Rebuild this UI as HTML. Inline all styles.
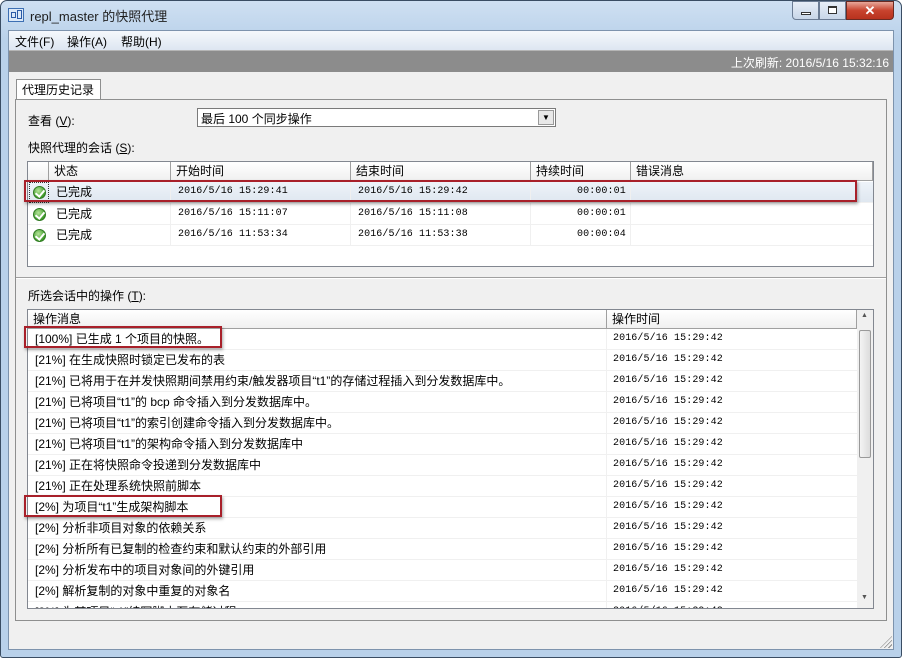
<!DOCTYPE html>
<html><head><meta charset="utf-8"><style>
*{box-sizing:border-box;margin:0;padding:0}
body{width:902px;height:658px;overflow:hidden;background:#fff;font-family:"Liberation Sans","Noto Sans CJK SC",sans-serif;font-size:12px;color:#000;position:relative}
.a{position:absolute}
.win{left:0;top:0;width:902px;height:658px;border:1px solid #3a4d63;border-radius:7px 7px 3px 3px;background:linear-gradient(#cfe0f2,#b9d1ea 40px,#b9d1ea);}
.grid{background:#fff;border:1px solid #828790}
.hd{height:19px;background:linear-gradient(#fff,#f0f0f0);border-bottom:1px solid #a0a0a0}
.col{position:absolute;top:0;height:19px;border-left:1px solid #a0a0a0;padding:1px 5px;line-height:17px}
.row{position:absolute;left:0;height:21px;border-bottom:1px solid #f0f0f0;line-height:20px;white-space:nowrap}
.m{font-family:"Liberation Mono","Noto Sans CJK SC",monospace;font-size:10px;letter-spacing:0.1px}
.red{position:absolute;border:2px solid #a8202a;box-shadow:1px 2px 3px rgba(0,0,0,.35)}
.ok{position:absolute;width:13px;height:13px;border-radius:50%;background:radial-gradient(circle at 40% 35%,#b6e59a,#3f9a2a 70%);border:1px solid #2f7a22}
.ok:after{content:"";position:absolute;left:3px;top:1px;width:4px;height:7px;border:solid #fff;border-width:0 2px 2px 0;transform:rotate(40deg)}
</style></head><body>
<div class="a win"></div>
<div class="a" style="left:8px;top:8px;width:16px;height:14px;border:1px solid #3d6fb3;background:#dbe8f7"></div>
<div class="a" style="left:11px;top:12px;width:5px;height:6px;border:1px solid #2a5aa6"></div>
<div class="a" style="left:17px;top:10px;width:5px;height:9px;border:1px solid #2a5aa6"></div>
<div class="a" style="left:30px;top:6px;font-size:13px;color:#1e1e1e">repl_master 的快照代理</div>
<div class="a" style="left:792px;top:1px;width:27px;height:19px;border:1px solid #6b7c94;border-radius:0 0 0 4px;background:linear-gradient(#e7eef7,#c8d6e8)"></div>
<div class="a" style="left:801px;top:12px;width:10px;height:3px;border:1px solid #333;background:#fff"></div>
<div class="a" style="left:819px;top:1px;width:27px;height:19px;border:1px solid #6b7c94;background:linear-gradient(#e7eef7,#c8d6e8)"></div>
<div class="a" style="left:828px;top:6px;width:9px;height:8px;border:1px solid #333;border-top-width:2px;background:#fff"></div>
<div class="a" style="left:846px;top:1px;width:48px;height:19px;border:1px solid #6b2a22;border-radius:0 0 4px 0;background:linear-gradient(#e8a89a,#c8432e 50%,#b8321e);color:#fff;font-weight:bold;text-align:center;line-height:17px;font-size:13px">✕</div>
<div class="a" style="left:8px;top:30px;width:886px;height:620px;background:#f0f0f0;border:1px solid #7d93ad"></div>
<div class="a" style="left:9px;top:31px;width:884px;height:19px;background:linear-gradient(#f5f8fc,#dde6f1)"></div>
<div class="a" style="left:15px;top:33px">文件(F)</div>
<div class="a" style="left:67px;top:33px">操作(A)</div>
<div class="a" style="left:121px;top:33px">帮助(H)</div>
<div class="a" style="left:9px;top:50px;width:884px;height:22px;background:#8c8c8c;border-top:1px solid #b5b5b5"></div>
<div class="a" style="right:13px;top:54px;color:#fff">上次刷新: 2016/5/16 15:32:16</div>
<div class="a" style="left:16px;top:79px;width:85px;height:21px;background:#fff;border:1px solid #8e8f8f;border-bottom:none"></div>
<div class="a" style="left:22px;top:81px">代理历史记录</div>
<div class="a" style="left:15px;top:99px;width:872px;height:522px;background:#f0f0f0;border:1px solid #8e8f8f"></div>
<div class="a" style="left:28px;top:112px">查看 (<u>V</u>):</div>
<div class="a" style="left:197px;top:108px;width:359px;height:19px;background:#fff;border:1px solid #7a7a7a"></div>
<div class="a" style="left:201px;top:110px">最后 100 个同步操作</div>
<div class="a" style="left:538px;top:110px;width:16px;height:15px;background:#e8e8e8;border:1px solid #999;text-align:center;font-size:8px;line-height:14px">▼</div>
<div class="a" style="left:28px;top:139px">快照代理的会话 (<u>S</u>):</div>
<div class="a grid" style="left:27px;top:161px;width:847px;height:106px">
 <div class="a hd" style="left:0;top:0;width:845px"></div>
 <div class="col" style="left:20px">状态</div>
 <div class="col" style="left:142px">开始时间</div>
 <div class="col" style="left:322px">结束时间</div>
 <div class="col" style="left:502px">持续时间</div>
 <div class="col" style="left:602px;width:243px;border-right:1px solid #a0a0a0">错误消息</div>
 <div class="row" style="top:20px;width:845px;background:linear-gradient(#eef3f9,#dfe7f0)"></div>
 <div class="a" style="left:1px;top:20px;width:20px;height:21px;border:1px dotted #333"></div>
 <div class="row" style="top:42px;width:845px"></div>
 <div class="row" style="top:63px;width:845px"></div>
 <div class="ok" style="left:5px;top:24px"></div><div class="ok" style="left:5px;top:46px"></div><div class="ok" style="left:5px;top:67px"></div>
 <div class="row" style="left:28px;top:20px">已完成</div><div class="row" style="left:28px;top:42px">已完成</div><div class="row" style="left:28px;top:63px">已完成</div>
 <div class="row m" style="left:150px;top:20px">2016/5/16 15:29:41</div><div class="row m" style="left:150px;top:42px">2016/5/16 15:11:07</div><div class="row m" style="left:150px;top:63px">2016/5/16 11:53:34</div>
 <div class="row m" style="left:330px;top:20px">2016/5/16 15:29:42</div><div class="row m" style="left:330px;top:42px">2016/5/16 15:11:08</div><div class="row m" style="left:330px;top:63px">2016/5/16 11:53:38</div>
 <div class="row m" style="left:549px;top:20px">00:00:01</div><div class="row m" style="left:549px;top:42px">00:00:01</div><div class="row m" style="left:549px;top:63px">00:00:04</div>
 <div class="a" style="left:142px;top:20px;height:63px;border-left:1px solid #f0f0f0"></div>
 <div class="a" style="left:322px;top:20px;height:63px;border-left:1px solid #f0f0f0"></div>
 <div class="a" style="left:502px;top:20px;height:63px;border-left:1px solid #f0f0f0"></div>
 <div class="a" style="left:602px;top:20px;height:63px;border-left:1px solid #f0f0f0"></div>
</div>
<div class="red" style="left:24px;top:180px;width:833px;height:22px"></div>
<div class="a" style="left:16px;top:277px;width:870px;border-top:1px solid #a0a0a0;border-bottom:1px solid #fff"></div>
<div class="a" style="left:28px;top:287px">所选会话中的操作 (<u>T</u>):</div>
<div class="a grid" style="left:27px;top:309px;width:847px;height:300px;overflow:hidden">
 <div class="a hd" style="left:0;top:0;width:829px"></div>
 <div class="col" style="left:0;border-left:none">操作消息</div>
 <div class="col" style="left:578px;width:251px;border-right:1px solid #a0a0a0">操作时间</div>
 <div class="a" style="left:578px;top:19px;height:290px;border-left:1px solid #f0f0f0"></div>
 <div class="a" style="left:829px;top:0;width:16px;height:298px;background:#f0f0f0"></div>
 <div class="a" style="left:831px;top:20px;width:12px;height:128px;border:1px solid #999;border-radius:2px;background:linear-gradient(90deg,#f4f4f4,#dcdcdc)"></div>
 <div class="a" style="left:833px;top:2px;font-size:7px;color:#555">▲</div>
 <div class="a" style="left:833px;top:284px;font-size:7px;color:#555">▼</div>
 <div id="r"></div>
</div>
<div class="red" style="left:24px;top:326px;width:198px;height:22px"></div>
<div class="red" style="left:24px;top:495px;width:198px;height:22px"></div>
<div class="a" style="left:880px;top:636px;width:12px;height:12px;background:repeating-linear-gradient(135deg,transparent 0 2px,#8a8a8a 2px 3px);clip-path:polygon(100% 0,100% 100%,0 100%)"></div>
<script>
var msgs=["[100%] 已生成 1 个项目的快照。","[21%] 在生成快照时锁定已发布的表","[21%] 已将用于在并发快照期间禁用约束/触发器项目“t1”的存储过程插入到分发数据库中。","[21%] 已将项目“t1”的 bcp 命令插入到分发数据库中。","[21%] 已将项目“t1”的索引创建命令插入到分发数据库中。","[21%] 已将项目“t1”的架构命令插入到分发数据库中","[21%] 正在将快照命令投递到分发数据库中","[21%] 正在处理系统快照前脚本","[2%] 为项目“t1”生成架构脚本","[2%] 分析非项目对象的依赖关系","[2%] 分析所有已复制的检查约束和默认约束的外部引用","[2%] 分析发布中的项目对象间的外键引用","[2%] 解析复制的对象中重复的对象名","[2%] 为某项目“t1”编写脚本至存储过程"];
var h="";for(var i=0;i<msgs.length;i++){var t=19+i*21;h+='<div class="row" style="top:'+t+'px;width:829px"></div><div class="row" style="left:7px;top:'+t+'px">'+msgs[i]+'</div><div class="row m" style="left:585px;top:'+t+'px">2016/5/16 15:29:42</div>';}
document.getElementById("r").outerHTML=h;
</script>
</body></html>
